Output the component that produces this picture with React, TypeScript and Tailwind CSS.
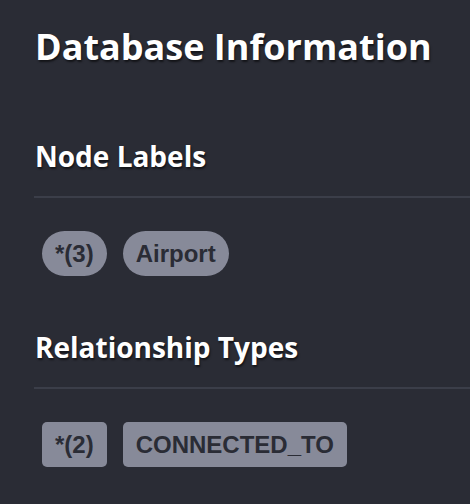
import React from "react";

const heading = "font-['Open_Sans',sans-serif] font-bold text-white [text-shadow:1px_2px_2px_rgba(0,0,0,0.55)]";
const badge = "font-['Liberation_Sans',Arial,sans-serif] font-bold text-[24px] leading-none text-[#2a2c35] bg-[#878a99] px-[13px] h-[45px] flex items-center";

function Section({ title, items, pill }: { title: string; items: string[]; pill: boolean }) {
  return (
    <section>
      <h2 className={`${heading} text-[28px] leading-[38px]`}>{title}</h2>
      <div className="mt-[21px] h-[2px] bg-[#3b3e49] -ml-px -mr-4" />
      <div className="flex gap-[16px] pl-[7px] mt-[33px]">
        {items.map((item) => (
          <span key={item} className={`${badge} ${pill ? "rounded-full" : "rounded-[5px]"}`}>
            {item}
          </span>
        ))}
      </div>
    </section>
  );
}

export default function App() {
  return (
    <div className="w-[470px] h-[504px] overflow-hidden bg-[#2a2c35] pl-[35px] pt-[22px]">
      <h1 className={`${heading} text-[36px] leading-[50px]`}>Database Information</h1>
      <div className="mt-[65px] flex flex-col gap-[52px]">
        <Section title="Node Labels" items={["*(3)", "Airport"]} pill />
        <Section title="Relationship Types" items={["*(2)", "CONNECTED_TO"]} pill={false} />
      </div>
    </div>
  );
}
